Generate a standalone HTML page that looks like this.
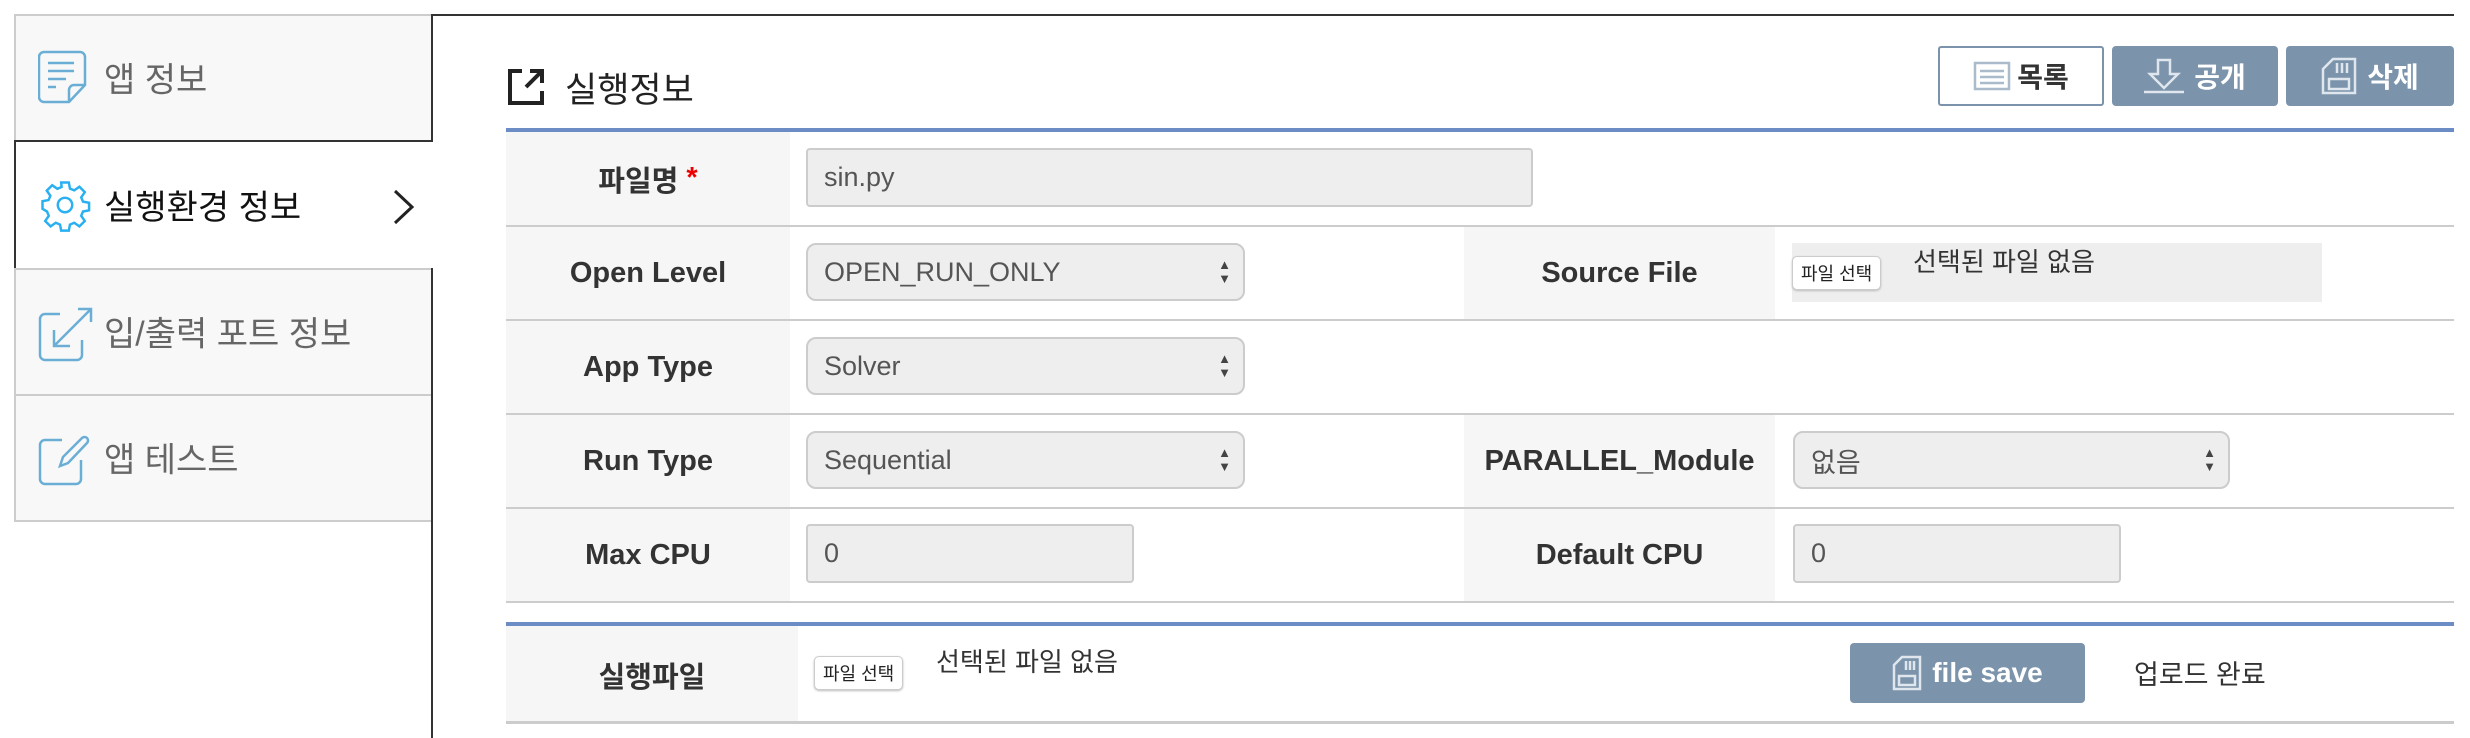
<!DOCTYPE html>
<html><head><meta charset="utf-8"><style>
*{box-sizing:border-box;margin:0;padding:0}
body{width:2470px;height:730px;background:#fff;position:relative;overflow:hidden;font-family:"Liberation Sans","Noto Sans CJK KR",sans-serif;}
.a{position:absolute}
.side{left:14px;width:417px;background:#f8f8f8;border:2px solid #ccc;border-right:none}
.side .t{position:absolute;left:88px;top:50%;transform:translateY(-52%);font-size:34px;color:#666}
.lab{background:#f6f6f6;display:flex;align-items:center;justify-content:center;font-weight:bold;font-size:29px;color:#333}
.hl{height:2px;background:#ccc;left:506px;width:1948px}
.inp{background:#eee;border:2px solid #ccc;border-radius:4px;font-size:27px;color:#555;padding-left:16px;display:flex;align-items:center}
.sel{border-radius:10px;background:#eee}
.arr{position:absolute;right:12px;top:50%;transform:translateY(-50%);font-size:13px;line-height:14px;color:#444;text-align:center}
.btn{background:#7b93ab;border-radius:4px;color:#fff;font-weight:bold;font-size:28px;display:flex;align-items:center;justify-content:center;gap:10px}
.fb{font-size:18px;color:#222;background:#fff;border:1px solid #ccc;border-radius:5px;padding:3px 8px;box-shadow:0 1px 2px #bbb}
</style></head><body>
<!-- sidebar -->
<div class="a side" style="top:14px;height:128px">
<svg class="a" style="left:22px;top:34px" width="50" height="54" viewBox="0 0 50 54" fill="none" stroke="#6aaed6" stroke-width="2.5"><path d="M6 2h36a5 5 0 0 1 5 5v28l-16 17H6a5 5 0 0 1-5-5V7a5 5 0 0 1 5-5z"/><path d="M31 52v-12a5 5 0 0 1 5-5h11"/><path d="M10 13h26M10 21h26M10 29h18M10 37h8"/></svg>
<div class="t">앱 정보</div></div>
<div class="a" style="left:14px;top:140px;width:419px;height:130px;background:#fff;border:2px solid #333;border-right:none">
<svg class="a" style="left:22px;top:36px" width="54" height="54" viewBox="0 0 24 24" fill="none" stroke="#2ab0f0" stroke-width="1.1"><circle cx="12" cy="12" r="3.2"/><path d="M10.3 2h3.4l.5 2.7 1.9.8 2.3-1.6 2.4 2.4-1.6 2.3.8 1.9 2.7.5v3.4l-2.7.5-.8 1.9 1.6 2.3-2.4 2.4-2.3-1.6-1.9.8-.5 2.7h-3.4l-.5-2.7-1.9-.8-2.3 1.6-2.4-2.4 1.6-2.3-.8-1.9L2 13.7v-3.4l2.7-.5.8-1.9-1.6-2.3 2.4-2.4 2.3 1.6 1.9-.8z"/></svg>
<div class="a" style="left:88px;top:38px;font-size:34px;color:#111">실행환경 정보</div>
<svg class="a" style="left:376px;top:46px" width="24" height="38" viewBox="0 0 24 38" fill="none" stroke="#222" stroke-width="3"><path d="M3 3l17 16L3 35"/></svg>
</div>
<div class="a side" style="top:268px;height:128px">
<svg class="a" style="left:22px;top:36px" width="56" height="56" viewBox="0 0 56 56" fill="none" stroke="#6aaed6" stroke-width="2.5"><path d="M22 8H7a5 5 0 0 0-5 5v36a5 5 0 0 0 5 5h32a5 5 0 0 0 5-5V34"/><path d="M53 3L16 40M16 24v16h16M40 3h13v13"/></svg>
<div class="t">입/출력 포트 정보</div></div>
<div class="a side" style="top:394px;height:128px;border-bottom:2px solid #ccc">
<svg class="a" style="left:22px;top:38px" width="52" height="52" viewBox="0 0 52 52" fill="none" stroke="#6aaed6" stroke-width="2.5"><path d="M24 6H7a5 5 0 0 0-5 5v34a5 5 0 0 0 5 5h31a5 5 0 0 0 5-5V26"/><path d="M22 32l3-9L44 4a3 3 0 0 1 5 5L30 29z"/></svg>
<div class="t">앱 테스트</div></div>
<!-- panel borders -->
<div class="a" style="left:431px;top:14px;width:2px;height:128px;background:#333"></div>
<div class="a" style="left:431px;top:268px;width:2px;height:470px;background:#333"></div>
<div class="a" style="left:431px;top:14px;width:2023px;height:2px;background:#333"></div>
<!-- title -->
<svg class="a" style="left:506px;top:67px" width="40" height="40" viewBox="0 0 40 40" fill="none" stroke="#222" stroke-width="4"><path d="M16 4H4v32h32V24"/><path d="M20 20L36 4M24 4h12v12"/></svg>
<div class="a" style="left:565px;top:62px;font-size:35px;color:#222">실행정보</div>
<!-- buttons -->
<div class="a" style="left:1938px;top:46px;width:166px;height:60px;border:2px solid #7b93ab;border-radius:3px;display:flex;align-items:center;justify-content:center;gap:6px;font-weight:bold;font-size:28px;color:#333">
<svg width="38" height="30" viewBox="0 0 38 30" fill="none" stroke="#aabbcc" stroke-width="2.5"><rect x="2" y="2" width="34" height="26"/><path d="M7 10h24M7 16h24M7 22h24"/></svg>목록</div>
<div class="a btn" style="left:2112px;top:46px;width:166px;height:60px">
<svg width="40" height="36" viewBox="0 0 40 36" fill="none" stroke="#dfe6ee" stroke-width="2.5"><path d="M14 2h12v14h8L20 30 6 16h8z"/><path d="M0 34h40"/></svg>공개</div>
<div class="a btn" style="left:2286px;top:46px;width:168px;height:60px">
<svg width="36" height="38" viewBox="0 0 36 38" fill="none" stroke="#dfe6ee" stroke-width="2.5"><path d="M12 2h22v34H2V12z"/><path d="M16 6v10M21 6v10M26 6v10M8 22h20v10H8z"/></svg>삭제</div>
<!-- table -->
<div class="a" style="left:506px;top:128px;width:1948px;height:4px;background:#6b8cc4"></div>
<div class="a lab" style="left:506px;top:132px;width:284px;height:93px">파일명&nbsp;<span style="color:#e00">*</span></div>
<div class="a inp" style="left:806px;top:148px;width:727px;height:59px">sin.py</div>
<div class="a hl" style="top:225px"></div>
<div class="a lab" style="left:506px;top:227px;width:284px;height:92px">Open Level</div>
<div class="a inp sel" style="left:806px;top:243px;width:439px;height:58px">OPEN_RUN_ONLY<div class="arr">▲<br>▼</div></div>
<div class="a lab" style="left:1464px;top:227px;width:311px;height:92px">Source File</div>
<div class="a" style="left:1792px;top:243px;width:530px;height:59px;background:#eee"></div>
<div class="a fb" style="left:1792px;top:256px">파일 선택</div>
<div class="a" style="left:1913px;top:242px;font-size:26px;color:#333">선택된 파일 없음</div>
<div class="a hl" style="top:319px"></div>
<div class="a lab" style="left:506px;top:321px;width:284px;height:92px">App Type</div>
<div class="a inp sel" style="left:806px;top:337px;width:439px;height:58px">Solver<div class="arr">▲<br>▼</div></div>
<div class="a hl" style="top:413px"></div>
<div class="a lab" style="left:506px;top:415px;width:284px;height:92px">Run Type</div>
<div class="a inp sel" style="left:806px;top:431px;width:439px;height:58px">Sequential<div class="arr">▲<br>▼</div></div>
<div class="a lab" style="left:1464px;top:415px;width:311px;height:92px">PARALLEL_Module</div>
<div class="a inp sel" style="left:1793px;top:431px;width:437px;height:58px">없음<div class="arr">▲<br>▼</div></div>
<div class="a hl" style="top:507px"></div>
<div class="a lab" style="left:506px;top:509px;width:284px;height:92px">Max CPU</div>
<div class="a inp" style="left:806px;top:524px;width:328px;height:59px">0</div>
<div class="a lab" style="left:1464px;top:509px;width:311px;height:92px">Default CPU</div>
<div class="a inp" style="left:1793px;top:524px;width:328px;height:59px">0</div>
<div class="a hl" style="top:601px"></div>
<div class="a" style="left:506px;top:622px;width:1948px;height:4px;background:#6b8cc4"></div>
<div class="a lab" style="left:506px;top:626px;width:292px;height:97px">실행파일</div>
<div class="a fb" style="left:814px;top:656px">파일 선택</div>
<div class="a" style="left:936px;top:642px;font-size:26px;color:#333">선택된 파일 없음</div>
<div class="a btn" style="left:1850px;top:643px;width:235px;height:60px">
<svg width="30" height="36" viewBox="0 0 30 36" fill="none" stroke="#dfe6ee" stroke-width="2.5"><path d="M10 2h18v32H2V10z"/><path d="M14 6v9M18 6v9M22 6v9M7 21h16v9H7z"/></svg>file save</div>
<div class="a" style="left:2134px;top:653px;font-size:27px;color:#333">업로드 완료</div>
<div class="a hl" style="top:721px;height:3px"></div>
</body></html>
